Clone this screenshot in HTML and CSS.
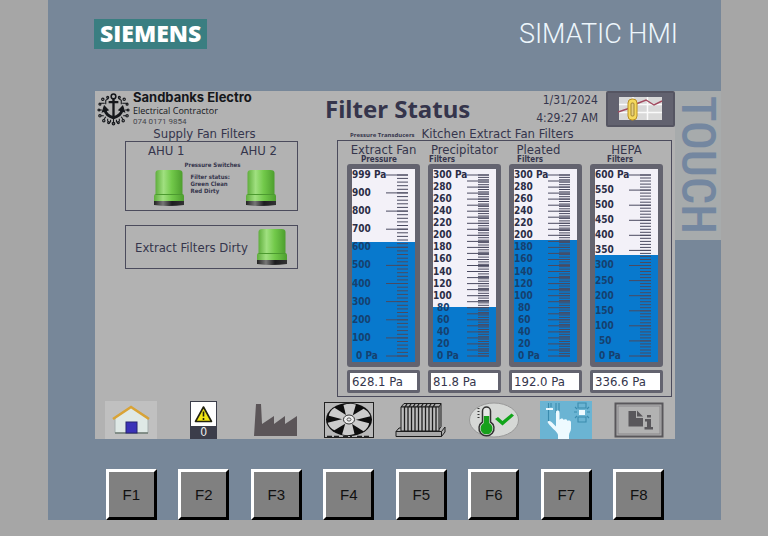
FILE: index.html
```html
<!DOCTYPE html>
<html lang="en">
<head>
<meta charset="utf-8">
<title>Filter Status</title>
<link rel="stylesheet" href="styles.css">
</head>
<body>
<main class="device">
  <header class="brand">
    <span class="maker">SIEMENS</span>
    <span class="model">SIMATIC HMI</span>
  </header>

  <div class="bezel">
    <section class="screen">
      <div class="topbar">
        <div class="company">
          <svg class="anchor" viewBox="0 0 34 34" fill="none" stroke="#15171b" stroke-width="1.1" aria-hidden="true">
            <circle cx="17" cy="4" r="2.4" stroke-width="1.6"/>
            <path d="M17 6.5V25M12 10h10" stroke-width="2.4"/>
            <path d="M8 18c1 4 4.500 7 9 8 4.500-1 8-4 9-8" stroke-width="3"/>
            <path d="M5.500 20l2-6 4 4zM28.500 20l-2-6-4 4z" fill="#15171b"/>
            <path d="M12 6l-3 2v4M22 6l3 2v4M8 11H4M26 11h4M2 18h3M29 18h3M7 24H4M27 24h3M11 27v3M23 27v3M14 28v3M20 28v3M17 26v6M9 25l-2 3M25 25l2 3"/>
            <g stroke-width="1.200"><circle cx="11" cy="5" r="1"/><circle cx="23" cy="5" r="1"/><circle cx="6" cy="7" r="1.200"/><circle cx="28" cy="7" r="1.200"/><circle cx="3" cy="12" r="1"/><circle cx="31" cy="12" r="1"/><circle cx="2" cy="18" r="1"/><circle cx="32" cy="18" r="1"/><circle cx="3" cy="24" r="1.200"/><circle cx="31" cy="24" r="1.200"/><circle cx="7" cy="29" r="1.200"/><circle cx="27" cy="29" r="1.200"/><circle cx="12" cy="31" r="1"/><circle cx="22" cy="31" r="1"/><circle cx="17" cy="32" r="1.300"/></g>
          </svg>
          <div class="company-text">
            <strong class="company-name">Sandbanks Electro</strong>
            <span class="company-role">Electrical Contractor</span>
            <span class="company-phone">074 0171 9854</span>
          </div>
        </div>
        <h1 class="title">Filter Status</h1>
        <div class="clock"><span>1/31/2024</span><span>4:29:27 AM</span></div>
        <button class="trend" type="button" aria-label="Trends">
          <svg viewBox="0 0 46 28" aria-hidden="true">
            <rect x="1" y="2" width="43" height="23" fill="#d9d9d9"/>
            <path d="M1 9.500h43M1 17.500h43M15 2v23M29.500 2v23" stroke="#fafafa" stroke-width="1.500"/>
            <path d="M0 17l9-3 9-5 10-4 8 5 8-4" fill="none" stroke="#a34b60" stroke-width="1.400"/>
            <rect x="10" y="4" width="9" height="21" rx="4" fill="#f5d95c" stroke="#b98f22"/>
            <rect x="13" y="8" width="3" height="13" rx="1" fill="#e6cf7d" stroke="#8f7429" stroke-width=".8"/>
          </svg>
        </button>
      </div>

      <div class="content">
        <section class="left">
          <h2 class="group-title">Supply Fan Filters</h2>
          <div class="frame supply">
            <div class="unit">
              <h3>AHU 1</h3>
              <svg class="lamp"><use href="#lamp"/></svg>
            </div>
            <div class="legend">
              <p class="legend-title">Pressure Switches</p>
              <p class="legend-body">Filter status:<br>Green Clean<br>Red Dirty</p>
            </div>
            <div class="unit">
              <h3>AHU 2</h3>
              <svg class="lamp"><use href="#lamp"/></svg>
            </div>
          </div>
          <div class="frame extract">
            <h3>Extract Filters Dirty</h3>
            <svg class="lamp"><use href="#lamp"/></svg>
          </div>
        </section>

        <section class="right">
          <div class="right-head">
            <span class="tiny">Pressure Transducers</span>
            <h2 class="group-title">Kitchen Extract Fan Filters</h2>
          </div>
          <div class="frame gauges" id="gauges"></div>
        </section>
      </div>

      <nav class="icons">
        <button type="button" class="tile home" aria-label="Home">
          <svg viewBox="0 0 52 38" aria-hidden="true">
            <path d="M10 16L26 6l17 10v16H10z" fill="#dfe9e6" stroke="#a5aeae"/>
            <path d="M10 32h33" stroke="#6f7d74" stroke-width="1.500"/>
            <path d="M8 18L26 6l18 12" fill="none" stroke="#d9a336" stroke-width="2.600"/>
            <rect x="21" y="21" width="11" height="11" fill="#3a32b8" stroke="#262270"/>
          </svg>
        </button>
        <button type="button" class="tile alarm" aria-label="Alarms">
          <svg viewBox="0 0 25 24" aria-hidden="true">
            <path d="M12.500 5l8 14.500h-16z" fill="#f2e614" stroke="#22220f" stroke-width="1.600" stroke-linejoin="round"/>
            <path d="M12.500 9.500v5M12.500 16v2" stroke="#22220f" stroke-width="1.600"/>
          </svg>
          <span>0</span>
        </button>
        <button type="button" class="tile" aria-label="Plant">
          <svg viewBox="0 0 52 38" aria-hidden="true"><path d="M4 35L6 3h5l1 20 12-8v8l11-8v8l12-8v20z" fill="#5b5558"/></svg>
        </button>
        <button type="button" class="tile" aria-label="Fans">
          <svg viewBox="0 0 52 38" aria-hidden="true">
            <rect x="1.500" y="1.500" width="49" height="35" fill="#b9b9b9" stroke="#222"/>
            <ellipse cx="26" cy="18.500" rx="23" ry="16.500" fill="#0d0d0d"/>
            <g transform="translate(26 18.500) scale(1.380 1)" fill="#cbcbcb">
              <path d="M-2-3L-4-14.500Q0-16.500 5-15L2.500-3z" id="blade"/>
              <use href="#blade" transform="rotate(60)"/>
              <use href="#blade" transform="rotate(120)"/>
              <use href="#blade" transform="rotate(180)"/>
              <use href="#blade" transform="rotate(240)"/>
              <use href="#blade" transform="rotate(300)"/>
            </g>
            <ellipse cx="26" cy="18.500" rx="5.500" ry="4.500" fill="#ededed" stroke="#333"/>
            <ellipse cx="26" cy="18.500" rx="2" ry="1.600" fill="none" stroke="#555"/>
            <path d="M4 35.500h13M20 35.500h9M34 35.500h12" stroke="#222" stroke-width="1.500" stroke-dasharray="5 2"/>
          </svg>
        </button>
        <button type="button" class="tile" aria-label="Heater">
          <svg viewBox="0 0 52 38" fill="none" stroke="#1d1d1d" aria-hidden="true">
            <path d="M6 6l3-3.500h37l-2 3.500zM46 2.500v23l-2 3" fill="#aaa"/>
            <path d="M6 6h38v24H6z" fill="#bdbdbd"/>
            <path d="M9.500 6v24M13 6v24M16.500 6v24M20 6v24M23.500 6v24M27 6v24M30.500 6v24M34 6v24M37.500 6v24M41 6v24M10 6l2-3M14 6l2-3M18 6l2-3M22 6l2-3M26 6l2-3M30 6l2-3M34 6l2-3M38 6l2-3" stroke-width="1.300"/>
            <path d="M1 30.500h45.500v5H1zM1 30.500L4 27h2M46.500 30.500L50 26v5l-3.500 4.500" fill="#aaa"/>
          </svg>
        </button>
        <button type="button" class="tile" aria-label="Temperature">
          <svg viewBox="0 0 52 38" aria-hidden="true">
            <ellipse cx="26" cy="19" rx="24.500" ry="17" fill="#d6d8d6" stroke="#999"/>
            <path d="M14.500 10a4 4 0 0 1 8 0v11a7.500 7.500 0 1 1-8 0z" fill="#e6e8e6" stroke="#333" stroke-width="1.500"/>
            <path d="M15.800 15h5.400v7a6 6 0 1 1-5.400 0z" fill="#17a01c"/>
            <path d="M10.500 7v12" stroke="#333" stroke-width="2" stroke-dasharray="1 2"/>
            <path d="M27 18l3-2 4.500 4 9-7.500 2.500 2L34.500 24.500z" fill="#11a51a"/>
          </svg>
        </button>
        <button type="button" class="tile touch-tile" aria-label="Manual control">
          <svg viewBox="0 0 52 38" aria-hidden="true">
            <g fill="none" stroke="#3a8bae" stroke-width="1.100">
              <path d="M8.500 2v18M11 2v4M16 2v10M19 2v10M38 2h8v5h-8zM38 16h8v5h-8zM35 6l2 2M49 6l-2 2M34 11h3M47 11h3M35 17l2-2M49 17l-2-2"/>
            </g>
            <path d="M6 8h7" stroke="#eefaff" stroke-width="2"/>
            <rect x="39" y="9" width="6" height="5" fill="#eefaff"/>
            <path d="M16 11c0-2 3.500-2 3.500 0v8c1-2 4-2 4 0 1-1.500 4-1 4 1 1-1 3.500-.5 3.500 1.500v6c0 3-2 4-2 7v3.500H18V34c0-3-9-9-10.500-13 1-2 3.500-1 4.500.5l4 4z" fill="#eefaff"/>
          </svg>
        </button>
        <button type="button" class="tile" aria-label="Information">
          <svg viewBox="0 0 52 38" aria-hidden="true">
            <rect x="2.500" y="2.500" width="47" height="33" fill="#b2b2b2" stroke="#59575b" stroke-width="2"/>
            <rect x="5" y="5" width="42" height="28" fill="none" stroke="#8a888b"/>
            <path d="M15.500 10H23v7h7v8.500H15.500z" fill="#59575b"/><path d="M24 9.500l6 6h-6z" fill="#59575b"/>
            <path d="M32 18h6v8h2v2.500h-8.500V26H34v-5.500h-2zM34 14h4v2.500h-4z" fill="#59575b"/>
          </svg>
        </button>
      </nav>
    </section>
    <div class="side"><span>TOUCH</span></div>
  </div>

  <div class="keys">
    <button type="button">F1</button><button type="button">F2</button><button type="button">F3</button><button type="button">F4</button><button type="button">F5</button><button type="button">F6</button><button type="button">F7</button><button type="button">F8</button>
  </div>
</main>

<svg class="defs" aria-hidden="true">
  <defs>
    <linearGradient id="green"><stop offset="0" stop-color="#5fae3c"/><stop offset=".3" stop-color="#a0e080"/><stop offset=".6" stop-color="#72c94a"/><stop offset="1" stop-color="#4d9e2e"/></linearGradient>
    <linearGradient id="base"><stop offset="0" stop-color="#222"/><stop offset=".3" stop-color="#777"/><stop offset=".6" stop-color="#1d1d1f"/><stop offset="1" stop-color="#333"/></linearGradient>
    <symbol id="lamp" viewBox="0 0 32 38">
      <path d="M1 31h30v5q-15 2-30 0z" fill="url(#base)"/>
      <path d="M1 27q0-2 2-2h26q2 0 2 2v5H1z" fill="url(#green)"/>
      <path d="M2.500 25.500V4q0-3 4-3h19q4 0 4 3v21.500z" fill="url(#green)"/>
      <path d="M2.500 25.500h27" stroke="#4c9a30"/>
    </symbol>
  </defs>
</svg>
<script src="gauges.js"></script>
</body>
</html>
```
FILE: styles.css
```css
* { box-sizing: border-box; }
body {
  margin: 0;
  padding: 0 47px 16px 48px;
  background: #a6a6a6;
  color: #35354c;
  font-family: "DejaVu Sans Condensed", "DejaVu Sans", sans-serif;
}
h1, h2, h3, p { margin: 0; font-weight: 400; }
button { font: inherit; color: inherit; border: 0; padding: 0; background: none; }
svg { display: block; }
.defs { position: absolute; width: 0; height: 0; }

.device { background: #778799; padding-top: 19px; }
.brand {
  display: flex;
  justify-content: space-between;
  align-items: center;
  height: 30px;
  margin: 0 43px 42px 46px;
}
.maker {
  background: #3a7e81;
  color: #fff;
  font: 800 23px/28px "Open Sans", sans-serif;
  padding: 0 6px 2px;
}
.model { color: #edf6fc; font: 300 27px/30px Roboto, sans-serif; }

.bezel { display: grid; grid-template-columns: 1fr 46px; padding-left: 47px; }
.side {
  height: 149px;
  background: #a7abac;
  color: #7487a0;
  display: flex;
  justify-content: flex-end;
}
.side span {
  writing-mode: vertical-rl;
  font: 500 48px/46px "Roboto Condensed", "Liberation Sans Narrow", "Liberation Sans", sans-serif;
  padding-top: 5px;
}

.screen { background: #b2b2b2; min-width: 0; }
.topbar { display: grid; grid-template-columns: 229px 1fr auto 69px; height: 36px; }
.company { display: flex; gap: 3px; padding-left: 2px; color: #15171b; }
.anchor { width: 33px; height: 36px; flex: none; }
.company-text { display: flex; flex-direction: column; white-space: nowrap; }
.company-name { font: 700 13px/13px Inter, sans-serif; }
.company-role { font: 9px/13px "Open Sans", sans-serif; }
.company-phone { font: 8px/10px Roboto, sans-serif; color: #45464c; }
.title { font: 700 24px/36px "Noto Sans", sans-serif; white-space: nowrap; padding-left: 1px; }
.clock {
  display: flex;
  flex-direction: column;
  align-items: flex-end;
  font-size: 12px;
  line-height: 18px;
  padding-right: 8px;
}
.trend {
  background: #62626f;
  border: 2px solid #555562;
  border-radius: 2px;
  display: grid;
  place-items: center;
}
.trend svg { width: 46px; height: 28px; }

.content { display: grid; grid-template-columns: 173px 335px; justify-content: space-between; padding: 0 3px 0 30px; }
.group-title { font-size: 13px; line-height: 13px; white-space: nowrap; }
.frame { border: 1px solid #4b4b5c; }
.left .group-title { text-align: center; padding-right: 14px; padding-bottom: 1px; }
.left h3 { font-size: 13px; line-height: 17px; white-space: nowrap; }
.lamp { width: 32px; height: 38px; }
.supply { display: grid; grid-template-columns: auto auto auto; justify-content: space-between; height: 70px; padding: 0 25px 0 22px; }
.unit { display: grid; justify-items: end; align-content: start; gap: 10px; }
.legend { font: 6px/7px "DejaVu Sans Condensed", "DejaVu Sans", sans-serif; padding-top: 19px; white-space: nowrap; }
.legend p { font-weight: 700; }
.legend-title { padding-bottom: 5px; }
.legend-body { padding-left: 6px; }
.extract { display: flex; justify-content: space-between; align-items: center; height: 44px; margin-top: 14px; padding: 0 9px; }

.right-head { display: flex; align-items: center; gap: 7px; padding-left: 13px; height: 13px; }
.tiny { font: 700 6px/13px "Open Sans", sans-serif; padding-top: 3px; }
.gauges { display: grid; grid-template-columns: repeat(4, 73px); justify-content: space-between; padding: 3px 8px 3px 9px; }
.gauge { display: flex; flex-direction: column; white-space: nowrap; }
.gauge-name { display: block; font-size: 13px; line-height: 12px; text-align: center; }
.gauge-kind { font-size: 8px; line-height: 8px; font-weight: 700; padding: 0 18px 0 1px; }
.gauge:first-child .gauge-kind { padding-left: 14px; }
.gauge:nth-child(3) .gauge-name { padding-right: 14px; }
.gauge:nth-child(3) .gauge-kind { padding-left: 8px; }
.gauge:last-child .gauge-kind { padding-left: 17px; }
.tank {
  display: grid;
  height: 203px;
  border: 5px solid #63636f;
  border-radius: 3px;
  background: #f3f1f8;
}
.tank > * { grid-area: 1 / 1; }
.fill { align-self: end; background: #0879cd; }
.scale {
  list-style: none;
  margin: 0;
  padding: 0;
  display: flex;
  flex-direction: column;
  justify-content: space-between;
  height: 193px;
  font-size: 10px;
  line-height: 12px;
  font-weight: 700;
  color: #2b2d46;
}
.scale .wet { color: #16416f; }
.scale .short { padding-left: 4px; }
.ticks { width: 22px; height: 193px; justify-self: end; margin-right: 7px; stroke: #4a4a60; }
.value {
  width: 100%;
  height: 23px;
  margin-top: 3px;
  border: 3px solid #63636f;
  border-radius: 2px;
  background: #fff;
  color: #35354c;
  font: 13px/17px "DejaVu Sans Condensed", "DejaVu Sans", sans-serif;
  padding: 0 2px;
}

.icons { display: grid; grid-template-columns: repeat(8, 1fr); justify-items: center; align-items: end; padding-top: 4px; }
.tile { height: 38px; width: 52px; }
.tile svg { width: 52px; height: 38px; }
.home { background: #c0c0c0; }
.touch-tile { background: #6bb4d3; }
.alarm { width: 27px; background: #3b3d4a; color: #eee; border: 1px solid #3b3d4a; font-size: 12px; line-height: 12px; }
.alarm svg { width: 25px; height: 24px; background: #fff; }
.alarm span { display: block; }

.keys { display: grid; grid-template-columns: repeat(8, 1fr); justify-items: center; padding: 30px 46px 0 47px; }
.keys button {
  width: 51px;
  height: 51px;
  background: #808080;
  border: 3px solid;
  border-color: #fff #000 #000 #fff;
  color: #111;
  font: 15px/20px "Liberation Sans", sans-serif;
}
```
FILE: gauges.js
```js
const gauges = [
  { name: "Extract Fan", kind: "Pressure", max: 999, step: 100, long: 100, minor: 20, value: 628.1 },
  { name: "Precipitator", kind: "Filters", max: 300, step: 20, long: 10, minor: 4, value: 81.8 },
  { name: "Pleated", kind: "Filters", max: 300, step: 20, long: 10, minor: 4, value: 192 },
  { name: "HEPA", kind: "Filters", max: 600, step: 50, long: 50, minor: 10, value: 336.6 }
];
const height = 193, top0 = 6, span = 181;

function ticks(g) {
  let d = "";
  const y = v => top0 + span * (1 - v / g.max);
  for (let v = 0; v <= g.max + 1; v += g.minor) d += `M11 ${y(Math.min(v, g.max)).toFixed(1)}h11`;
  for (let v = 0; v <= g.max + 1; v += g.long) d += `M0 ${y(Math.min(v, g.max)).toFixed(1)}h22`;
  return d;
}

document.getElementById("gauges").innerHTML = gauges.map((g, i) => {
  const labels = [];
  for (let v = 0; v <= g.max + 1; v += g.step) labels.unshift(Math.min(v, g.max));
  const items = labels.map(v => {
    const cls = (v < g.value ? "wet " : "") + (v < 100 ? "short" : "");
    const unit = v === 0 || v === g.max ? " Pa" : "";
    return `<li class="${cls}">${v}${unit}</li>`;
  }).join("");
  const fill = (height - top0 - span + span * g.value / g.max) / height * 100;
  return `<div class="gauge">
    <label class="gauge-name" for="g${i}">${g.name}</label>
    <span class="gauge-kind">${g.kind}</span>
    <div class="tank">
      <div class="fill" style="height:${fill.toFixed(1)}%"></div>
      <ul class="scale">${items}</ul>
      <svg class="ticks" viewBox="0 0 22 193"><path d="${ticks(g)}"/></svg>
    </div>
    <input class="value" id="g${i}" readonly value="${g.value.toFixed(1)} Pa">
  </div>`;
}).join("");
```
